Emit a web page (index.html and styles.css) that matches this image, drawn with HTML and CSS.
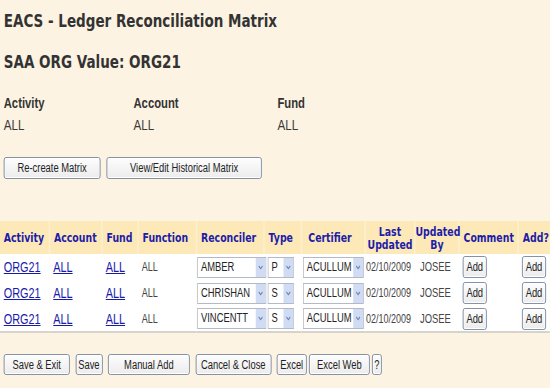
FILE: index.html
```html
<!DOCTYPE html>
<html>
<head>
<meta charset="utf-8">
<link rel="stylesheet" href="styles.css">
</head>
<body>
<div class="screen">
  <div class="page">
    <h1 class="title">EACS - Ledger Reconciliation Matrix</h1>
    <h2 class="subtitle">SAA ORG Value: ORG21</h2>
    <div class="filters">
      <div class="filter f1"><div class="flabel">Activity</div><div class="fval">ALL</div></div>
      <div class="filter f2"><div class="flabel">Account</div><div class="fval">ALL</div></div>
      <div class="filter"><div class="flabel">Fund</div><div class="fval">ALL</div></div>
    </div>
    <div class="toolbar top">
      <button class="btn b-recreate">Re-create Matrix</button>
      <button class="btn b-hist">View/Edit Historical Matrix</button>
    </div>
  </div>
  <table class="matrix">
    <colgroup>
      <col class="k1"><col class="k2"><col class="k3"><col class="k4"><col class="k5"><col class="k6">
      <col class="k7"><col class="k8"><col class="k9"><col class="k10"><col class="k11">
    </colgroup>
    <thead>
      <tr>
        <th>Activity</th>
        <th>Account</th>
        <th>Fund</th>
        <th>Function</th>
        <th>Reconciler</th>
        <th>Type</th>
        <th class="h-cert">Certifier</th>
        <th class="center">Last<br>Updated</th>
        <th class="center">Updated<br>By</th>
        <th>Comment</th>
        <th>Add?</th>
      </tr>
    </thead>
    <tbody>
      <tr>
        <td><a href="#">ORG21</a></td><td><a href="#">ALL</a></td><td><a href="#">ALL</a></td><td class="small">ALL</td>
        <td class="t-rec"><span class="sel s-rec"><span class="sv">AMBER</span><span class="arr"><svg width="7" height="5" viewBox="0 0 7 5"><path d="M1 1 L3.5 3.6 L6 1" fill="none" stroke="#6d7fa8" stroke-width="1.2"/></svg></span></span></td>
        <td class="t-type"><span class="sel s-type"><span class="sv">P</span><span class="arr"><svg width="7" height="5" viewBox="0 0 7 5"><path d="M1 1 L3.5 3.6 L6 1" fill="none" stroke="#6d7fa8" stroke-width="1.2"/></svg></span></span></td>
        <td class="t-cert"><span class="sel s-cert"><span class="sv">ACULLUM</span><span class="arr"><svg width="7" height="5" viewBox="0 0 7 5"><path d="M1 1 L3.5 3.6 L6 1" fill="none" stroke="#6d7fa8" stroke-width="1.2"/></svg></span></span></td>
        <td class="date">02/10/2009</td><td class="by">JOSEE</td>
        <td><button class="addbtn">Add</button></td><td><button class="addbtn">Add</button></td>
      </tr>
      <tr>
        <td><a href="#">ORG21</a></td><td><a href="#">ALL</a></td><td><a href="#">ALL</a></td><td class="small">ALL</td>
        <td class="t-rec"><span class="sel s-rec"><span class="sv">CHRISHAN</span><span class="arr"><svg width="7" height="5" viewBox="0 0 7 5"><path d="M1 1 L3.5 3.6 L6 1" fill="none" stroke="#6d7fa8" stroke-width="1.2"/></svg></span></span></td>
        <td class="t-type"><span class="sel s-type"><span class="sv">S</span><span class="arr"><svg width="7" height="5" viewBox="0 0 7 5"><path d="M1 1 L3.5 3.6 L6 1" fill="none" stroke="#6d7fa8" stroke-width="1.2"/></svg></span></span></td>
        <td class="t-cert"><span class="sel s-cert"><span class="sv">ACULLUM</span><span class="arr"><svg width="7" height="5" viewBox="0 0 7 5"><path d="M1 1 L3.5 3.6 L6 1" fill="none" stroke="#6d7fa8" stroke-width="1.2"/></svg></span></span></td>
        <td class="date">02/10/2009</td><td class="by">JOSEE</td>
        <td><button class="addbtn">Add</button></td><td><button class="addbtn">Add</button></td>
      </tr>
      <tr>
        <td><a href="#">ORG21</a></td><td><a href="#">ALL</a></td><td><a href="#">ALL</a></td><td class="small">ALL</td>
        <td class="t-rec"><span class="sel s-rec"><span class="sv">VINCENTT</span><span class="arr"><svg width="7" height="5" viewBox="0 0 7 5"><path d="M1 1 L3.5 3.6 L6 1" fill="none" stroke="#6d7fa8" stroke-width="1.2"/></svg></span></span></td>
        <td class="t-type"><span class="sel s-type"><span class="sv">S</span><span class="arr"><svg width="7" height="5" viewBox="0 0 7 5"><path d="M1 1 L3.5 3.6 L6 1" fill="none" stroke="#6d7fa8" stroke-width="1.2"/></svg></span></span></td>
        <td class="t-cert"><span class="sel s-cert"><span class="sv">ACULLUM</span><span class="arr"><svg width="7" height="5" viewBox="0 0 7 5"><path d="M1 1 L3.5 3.6 L6 1" fill="none" stroke="#6d7fa8" stroke-width="1.2"/></svg></span></span></td>
        <td class="date">02/10/2009</td><td class="by">JOSEE</td>
        <td><button class="addbtn">Add</button></td><td><button class="addbtn">Add</button></td>
      </tr>
    </tbody>
  </table>
  <div class="page">
    <div class="toolbar bottom">
      <button class="btn b-saveexit">Save &amp; Exit</button>
      <button class="btn b-save">Save</button>
      <button class="btn b-manual">Manual Add</button>
      <button class="btn b-cancel">Cancel &amp; Close</button>
      <div class="tight">
        <button class="btn b-excel">Excel</button>
        <button class="btn b-excelweb">Excel Web</button>
        <button class="btn b-help">?</button>
      </div>
    </div>
  </div>
</div>
</body>
</html>
```
FILE: styles.css
```css
html, body {
  margin: 0;
  padding: 0;
  background: #fdf3e3;
  overflow: hidden;
}
body {
  width: 550px;
  height: 388px;
  color: #333;
  font-family: "Liberation Sans", Arial, sans-serif;
}
/* the reference is a horizontally squeezed capture */
.screen {
  width: 733px;
  transform: scaleX(0.75);
  transform-origin: 0 0;
}
.page {
  padding: 0 5px;
}
.title, .subtitle, .matrix th {
  font-family: "DejaVu Sans", Verdana, sans-serif;
}
.title {
  margin: 0;
  padding-top: 10px;
  font-size: 18px;
  line-height: 22px;
  font-weight: bold;
  color: #333;
}
.subtitle {
  margin: 19px 0 0;
  font-size: 18px;
  line-height: 22px;
  font-weight: bold;
  color: #333;
}
.filters {
  display: flex;
  margin-top: 21px;
}
.filter.f1 { width: 173px; }
.filter.f2 { width: 192px; }
.flabel {
  font-size: 15px;
  line-height: 17px;
  font-weight: bold;
  color: #333;
}
.fval {
  margin-top: 5px;
  font-size: 15.5px;
  line-height: 18px;
  color: #3a3a3a;
}
.toolbar {
  display: flex;
  align-items: center;
  gap: 7.5px;
}
.toolbar.top { margin-top: 23px; gap: 8px; }
.toolbar.bottom { margin-top: 21px; }
.tight { display: flex; gap: 3px; }
.btn {
  height: 22px;
  padding: 0;
  border: 1px solid #74849c;
  border-radius: 3px;
  background: linear-gradient(#fdfdfd, #ececec);
  box-shadow: inset 0 0 0 1px #ffffff;
  font-family: "Liberation Sans", Arial, sans-serif;
  font-size: 12.5px;
  color: #222;
  white-space: nowrap;
}
.toolbar.bottom .btn { height: 21px; }
.b-recreate { width: 129px; }
.b-hist { width: 207px; }
.b-saveexit { width: 88px; }
.b-save { width: 36px; }
.b-manual { width: 109px; }
.b-cancel { width: 101px; }
.b-excel { width: 40px; }
.b-excelweb { width: 81px; }
.b-help { width: 13px; }
.matrix {
  margin-top: 42px;
  width: 733px;
  table-layout: fixed;
  border-collapse: collapse;
  border-bottom: 2px solid #d6d3cc;
}
.k1 { width: 66px; }
.k2 { width: 70px; }
.k3 { width: 48px; }
.k4 { width: 78px; }
.k5 { width: 90px; }
.k6 { width: 50px; }
.k7 { width: 85px; }
.k8 { width: 66px; }
.k9 { width: 59px; }
.k10 { width: 79px; }
.k11 { width: 42px; }
.matrix th {
  height: 33px;
  padding: 0 0 0 5px;
  background: #fce9b7;
  border-right: 2px solid #fdf0d2;
  color: #1d1daa;
  font-size: 12.5px;
  line-height: 13px;
  font-weight: bold;
  text-align: left;
  vertical-align: middle;
  white-space: nowrap;
  box-sizing: border-box;
}
.matrix th:last-child { border-right: 0; }
.matrix th.h-cert { padding-left: 8px; }
.matrix th.center { text-align: center; padding: 0; }
.matrix tbody tr { background: #fff; }
.matrix td {
  height: 26px;
  padding: 0 0 0 5px;
  font-size: 12.5px;
  color: #444;
  white-space: nowrap;
  vertical-align: middle;
  box-sizing: border-box;
}
.matrix a {
  color: #1a1aa8;
  text-decoration: underline;
  font-size: 14.5px;
}
.matrix td.small { font-size: 12px; }
.matrix td.t-rec { padding-left: 1px; }
.matrix td.t-cert { padding-left: 2px; }
.matrix td.date { padding-left: 1px; font-size: 12px; }
.matrix td.by { padding-left: 7px; font-size: 12.5px; }
.sel {
  display: flex;
  height: 21px;
  border: 1px solid #b3b9c6;
  background: #fff;
  box-sizing: border-box;
}
.s-rec { width: 92px; }
.s-type { width: 35px; }
.s-cert { width: 81px; }
.sv {
  flex: 1;
  padding-left: 4px;
  font-size: 12.5px;
  line-height: 19px;
  color: #222;
  overflow: hidden;
}
.arr {
  width: 13px;
  background: #cfdcf3;
  display: flex;
  align-items: center;
  justify-content: center;
}
.addbtn {
  display: block;
  width: 32px;
  height: 22px;
  padding: 0;
  border: 1px solid #74849c;
  border-radius: 3px;
  background: linear-gradient(#fdfdfd, #ececec);
  box-shadow: inset 0 0 0 1px #ffffff;
  font-family: "Liberation Sans", Arial, sans-serif;
  font-size: 12.5px;
  color: #222;
}
```
